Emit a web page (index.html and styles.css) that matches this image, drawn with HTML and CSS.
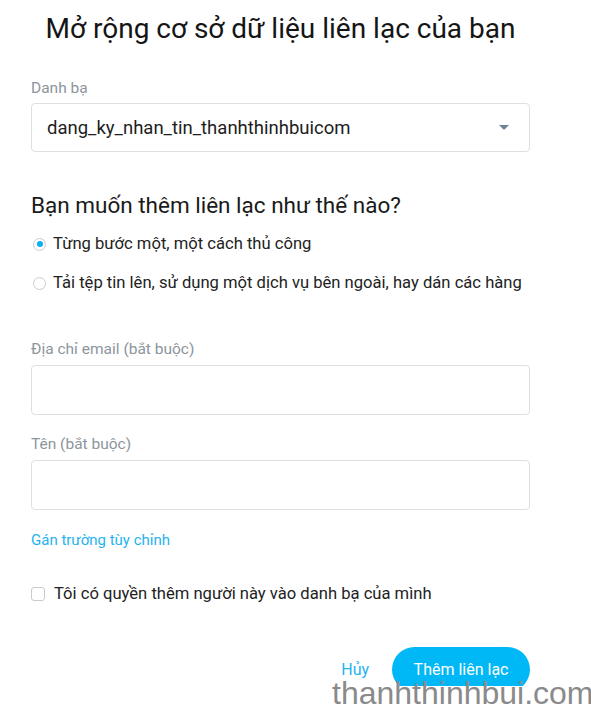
FILE: index.html
```html
<!DOCTYPE html>
<html lang="vi">
<head>
    <meta charset="UTF-8">
    <meta name="viewport" content="width=device-width, initial-scale=1.0">
    <title>Mở rộng cơ sở dữ liệu liên lạc của bạn</title>
    <link rel="stylesheet" href="styles.css">
</head>
<body>

<div class="page">
    <h1 class="title">Mở rộng cơ sở dữ liệu liên lạc của bạn</h1>

    <div class="field-label first">Danh bạ</div>
    <div class="select">
        <span>dang_ky_nhan_tin_thanhthinhbuicom</span>
        <span class="caret"></span>
    </div>

    <h2 class="question">Bạn muốn thêm liên lạc như thế nào?</h2>

    <div class="options">
        <label class="option">
            <span class="radio checked"></span>
            Từng bước một, một cách thủ công
        </label>
        <label class="option">
            <span class="radio"></span>
            Tải tệp tin lên, sử dụng một dịch vụ bên ngoài, hay dán các hàng
        </label>
    </div>

    <div class="field-label email">Địa chỉ email (bắt buộc)</div>
    <div class="input"></div>

    <div class="field-label">Tên (bắt buộc)</div>
    <div class="input"></div>

    <a class="custom-link" href="#">Gán trường tùy chỉnh</a>

    <label class="consent">
        <span class="checkbox"></span>
        Tôi có quyền thêm người này vào danh bạ của mình
    </label>

    <div class="actions">
        <a class="cancel" href="#">Hủy</a>
        <button class="primary">Thêm liên lạc</button>
    </div>
</div>

<div class="watermark">thanhthinhbui.com</div>

</body>
</html>
```

FILE: styles.css
```css
body {
    font-family: Roboto, "Noto Sans", Arial, sans-serif;
    margin: 0;
    padding: 0;
    background-color: #fff;
    color: #222;
}

.page {
    width: 499px;
    padding: 14px 0 0 31px;
}

.title {
    margin: 0;
    font-size: 28px;
    line-height: 30px;
    font-weight: 400;
    text-align: center;
    color: #151515;
}

.field-label {
    font-size: 15.5px;
    line-height: 20px;
    color: #8d959d;
    margin: 19px 0 6px;
}

.field-label.first {
    margin-top: 34px;
    margin-bottom: 5px;
}

.field-label.email {
    margin-top: 45px;
}

.select {
    height: 49px;
    box-sizing: border-box;
    border: 1px solid #dde0e3;
    border-radius: 4px;
    padding: 0 20px 0 15px;
    display: flex;
    align-items: center;
    justify-content: space-between;
    font-size: 18.5px;
    color: #1d1d1d;
}

.caret {
    width: 0;
    height: 0;
    border-left: 5px solid transparent;
    border-right: 5px solid transparent;
    border-top: 5px solid #6f8397;
}

.question {
    margin: 39px 0 0;
    font-size: 22.5px;
    line-height: 28px;
    font-weight: 400;
    color: #1a1a1a;
}

.options {
    display: flex;
    flex-direction: column;
    gap: 17px;
    margin-top: 14px;
}

.option,
.consent {
    display: flex;
    align-items: center;
    gap: 7px;
    font-size: 16.6px;
    line-height: 22px;
    color: #222;
}

.radio {
    width: 13px;
    height: 13px;
    box-sizing: border-box;
    border: 1px solid #c8ccd0;
    border-radius: 50%;
    margin-left: 2px;
    display: flex;
    align-items: center;
    justify-content: center;
}

.radio.checked::after {
    content: "";
    width: 6px;
    height: 6px;
    border-radius: 50%;
    background-color: #07b0f2;
}

.input {
    height: 50px;
    box-sizing: border-box;
    border: 1px solid #dde0e3;
    border-radius: 4px;
}

.custom-link {
    display: block;
    margin-top: 20px;
    font-size: 15px;
    line-height: 20px;
    color: #1fb3ee;
    text-decoration: none;
}

.consent {
    margin-top: 33px;
    gap: 9px;
}

.checkbox {
    width: 14px;
    height: 14px;
    box-sizing: border-box;
    border: 1px solid #c8ccd0;
    border-radius: 3px;
}

.actions {
    display: flex;
    justify-content: flex-end;
    align-items: center;
    gap: 23px;
    margin-top: 42px;
}

.cancel {
    font-size: 16px;
    color: #27b3ef;
    text-decoration: none;
}

.primary {
    height: 45px;
    padding: 0 21.5px;
    border: none;
    border-radius: 23px;
    background-color: #00b8f6;
    color: #fff;
    font-family: Roboto, "Noto Sans", Arial, sans-serif;
    font-size: 16px;
    cursor: pointer;
}

.watermark {
    position: absolute;
    left: 332px;
    top: 686px;
    width: 259px;
    height: 21px;
    background-color: #fff;
    font-family: "Liberation Sans", Arial, sans-serif;
    font-size: 32px;
    line-height: 14px;
    color: #8a8a8a;
    white-space: nowrap;
    overflow: visible;
}
```
